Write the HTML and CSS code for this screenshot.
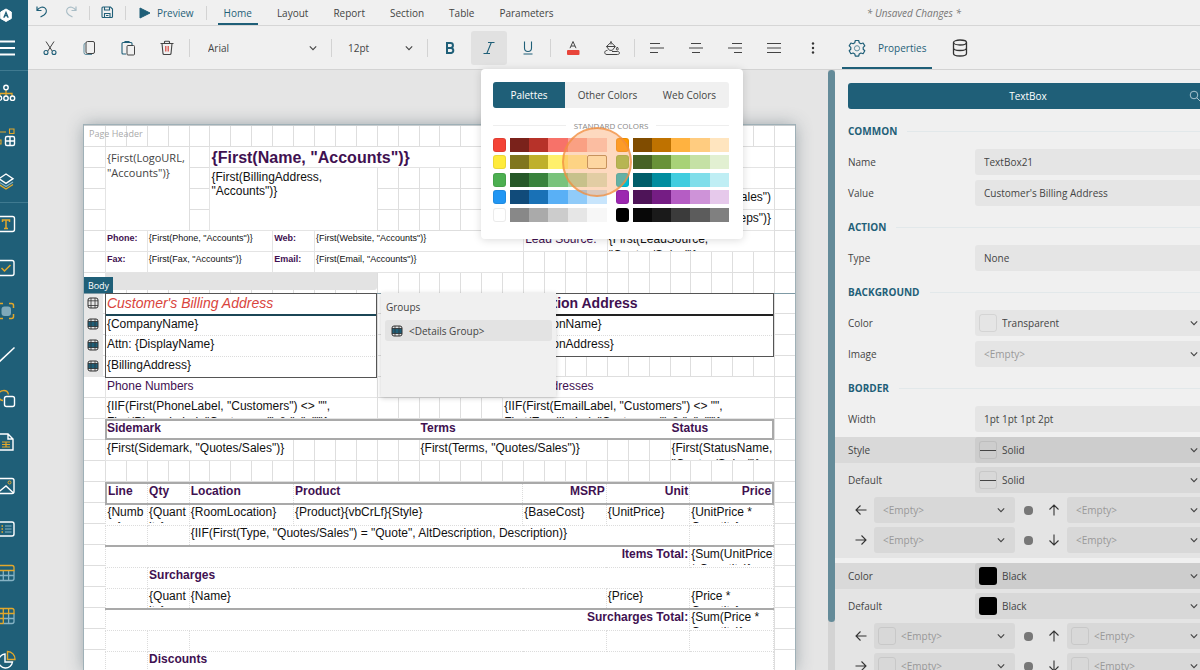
FILE: index.html
```html
<!DOCTYPE html>
<html lang="en">
<head>
    <meta charset="UTF-8">
    <meta name="viewport" content="width=device-width, initial-scale=1.0">
    <title>Report Designer</title>
    <link rel="stylesheet" href="styles.css">
</head>
<body>

<!-- Shared icons -->
<svg class="sprite" aria-hidden="true">
    <symbol id="chevron" viewBox="0 0 10 10"><path d="M1.8 3.4 5 6.6l3.2-3.2" fill="none" stroke="#444" stroke-width="1.1"/></symbol>
    <symbol id="arrow-left" viewBox="0 0 12 12"><path d="M11.5 6H1M5.5 1.5 1 6l4.500 4.500" fill="none" stroke="#333" stroke-width="1.1"/></symbol>
    <symbol id="arrow-right" viewBox="0 0 12 12"><path d="M.5 6H11M6.500 1.500 11 6l-4.500 4.500" fill="none" stroke="#333" stroke-width="1.1"/></symbol>
    <symbol id="arrow-up" viewBox="0 0 12 12"><path d="M6 11.500V1M1.500 5.500 6 1l4.500 4.500" fill="none" stroke="#333" stroke-width="1.1"/></symbol>
    <symbol id="arrow-down" viewBox="0 0 12 12"><path d="M6 .5V11M1.500 6.500 6 11l4.500-4.500" fill="none" stroke="#333" stroke-width="1.1"/></symbol>
    <symbol id="row-details" viewBox="0 0 12 12"><rect x="1" y="3.200" width="10" height="5.600" fill="#1f5f78"/><rect x="1" y="1" width="10" height="10" rx="2" fill="none" stroke="#333"/><path d="M1 3.500h10M1 8.500h10M4 1v10M8 1v10" stroke="#333" stroke-width=".8"/></symbol>
    <symbol id="row-header" viewBox="0 0 12 12"><rect x="1" y="1" width="10" height="10" rx="2" fill="none" stroke="#333"/><path d="M1 3.800h10M1 8.500h10M4 1v10M8 1v10" stroke="#333" stroke-width=".8"/></symbol>
</svg>

<div class="app">
    <nav class="sidebar" aria-label="Report items">
        <button class="side-btn logo" aria-label="Home page"><svg viewBox="0 0 20 20"><path d="M10 4l5.300 3v6.500L10 16.500l-5.300-3V7z" fill="#fff" stroke="#fff" stroke-linejoin="round"/><path d="M7.800 12.800 10 7.500l2.200 5.300M10 10v1.500" fill="none" stroke="#1f5f78" stroke-width="1.300"/></svg></button>
        <button class="side-btn menu" aria-label="Menu"><svg viewBox="0 0 20 20"><path d="M1 3.500h18M1 10h18M1 16.500h18" stroke="#fff" stroke-width="1.800"/></svg></button>
        <div class="side-group">
            <button class="side-btn" aria-label="Explorer"><svg viewBox="0 0 20 20" fill="none"><path d="M10 7v5M4 13v-2.500h12V13M10 10.500V13" stroke="#e3a82b" stroke-width="1.300"/><g stroke="#fff" stroke-width="1.400"><circle cx="10" cy="4.500" r="2.200"/><circle cx="3.500" cy="15.200" r="2.200"/><circle cx="10" cy="15.200" r="2.200"/><circle cx="16.500" cy="15.200" r="2.200"/></g></svg></button>
            <button class="side-btn" aria-label="Groups"><svg viewBox="0 0 20 20" fill="none"><path d="M3 8V5h7M5 13v4H2v-4zM13.500 2h4.500v4.500h-4.500z" stroke="#e3a82b" stroke-width="1.100"/><rect x="9.500" y="9.500" width="9" height="9" rx="1.500" stroke="#fff" stroke-width="1.400"/><path d="M14 9.500v9M9.500 14h9" stroke="#fff" stroke-width="1.400"/></svg></button>
            <button class="side-btn" aria-label="Layers"><svg viewBox="0 0 20 20" fill="none"><path d="M3 13.500l7 4.500 7-4.500" stroke="#e3a82b" stroke-width="1.300"/><path d="M3 11l7 4.500 7-4.500" stroke="#86b3c4" stroke-width="1.200"/><path d="M10 3l7 4.700-7 4.700-7-4.700z" stroke="#fff" stroke-width="1.400"/></svg></button>
        </div>
        <div class="side-group tools">
            <button class="side-btn" aria-label="Text box"><svg viewBox="0 0 20 20" fill="none"><rect x="1.500" y="2.500" width="17" height="15" rx="2" stroke="#fff" stroke-width="1.400"/><path d="M6.500 8V6h7v2M10 6v8.500M8 14.500h4" stroke="#e3a82b" stroke-width="1.500"/></svg></button>
            <button class="side-btn" aria-label="Check box"><svg viewBox="0 0 20 20" fill="none"><rect x="2" y="2.500" width="16" height="15" rx="2" stroke="#fff" stroke-width="1.400"/><path d="M5.500 10l3 3 6-6" stroke="#e3a82b" stroke-width="1.500"/></svg></button>
            <button class="side-btn" aria-label="Container"><svg viewBox="0 0 20 20" fill="none"><rect x="5.500" y="5.500" width="9.500" height="9.500" rx="3" fill="#7fa9ba"/><path d="M2.500 7V4.500a2 2 0 0 1 2-2H7M13 2.500h2.500a2 2 0 0 1 2 2V7M17.500 13v2.500a2 2 0 0 1-2 2H13M7 17.500H4.500a2 2 0 0 1-2-2V13" stroke="#e3a82b" stroke-width="1.500"/></svg></button>
            <button class="side-btn" aria-label="Line"><svg viewBox="0 0 20 20"><path d="M2 18 18.500 2.500" stroke="#fff" stroke-width="1.500"/></svg></button>
            <button class="side-btn" aria-label="Shape"><svg viewBox="0 0 20 20" fill="none"><path d="M7 12.500a5 5 0 1 1 5.500-6" stroke="#e3a82b" stroke-width="1.300"/><rect x="8.500" y="8.500" width="10" height="10" rx="2" stroke="#fff" stroke-width="1.400"/></svg></button>
            <button class="side-btn" aria-label="Rich text"><svg viewBox="0 0 20 20" fill="none"><path d="M3 2h9l5 5v11H3zM12 2v5h5" stroke="#fff" stroke-width="1.400"/><path d="M6 10h8M6 12.500h8M6 15h8M10 10v5" stroke="#e3a82b" stroke-width="1.200"/></svg></button>
            <button class="side-btn" aria-label="Image"><svg viewBox="0 0 20 20" fill="none"><rect x="2" y="2.500" width="16" height="15" rx="2" stroke="#fff" stroke-width="1.400"/><circle cx="13.500" cy="6.500" r="1.500" stroke="#e3a82b"/><path d="M2.500 16l7.500-6 7.500 7" stroke="#fff" stroke-width="1.400"/></svg></button>
            <button class="side-btn" aria-label="List"><svg viewBox="0 0 20 20" fill="none"><rect x="2" y="3" width="16" height="14" rx="2" stroke="#fff" stroke-width="1.400"/><path d="M9 7h6.500M9 10h6.500M9 13h6.500" stroke="#86b3c4" stroke-width="1.100"/><path d="M5.500 7H7M5.500 10H7M5.500 13H7" stroke="#e3a82b" stroke-width="1.300"/></svg></button>
            <button class="side-btn" aria-label="Table"><svg viewBox="0 0 20 20" fill="none"><path d="M2 7.500V15.500a2 2 0 0 0 2 2h12a2 2 0 0 0 2-2V7.500M7.300 7.500v10M12.600 7.500v10M2 12.500h16" stroke="#86b3c4" stroke-width="1.300"/><path d="M2 7.500V4.500a2 2 0 0 1 2-2h12a2 2 0 0 1 2 2v3z" stroke="#e3a82b" stroke-width="1.300"/></svg></button>
            <button class="side-btn" aria-label="Tablix"><svg viewBox="0 0 20 20" fill="none"><path d="M12.600 7.500v10M7.300 12.500H18M18 7.500v8a2 2 0 0 1-2 2H7.300" stroke="#86b3c4" stroke-width="1.300"/><path d="M7.300 17.500H4a2 2 0 0 1-2-2v-11a2 2 0 0 1 2-2h12a2 2 0 0 1 2 2v3H2M7.300 2.500v15M12.600 2.500v5M2 12.500h5.300" stroke="#e3a82b" stroke-width="1.300"/></svg></button>
            <button class="side-btn" aria-label="Chart"><svg viewBox="0 0 20 20" fill="none"><path d="M9 4a7 7 0 1 0 7.500 8H9z" stroke="#fff" stroke-width="1.400"/><path d="M11.500 9.500v-8a7.500 7.500 0 0 1 7.500 8z" stroke="#e3a82b" stroke-width="1.400"/></svg></button>
        </div>
    </nav>

    <div class="workspace">
        <header class="menubar">
            <button class="menu-icon" aria-label="Undo"><svg viewBox="0 0 14 14"><path d="M2 1.500v4h4.500M2.200 5.300C4 2 8.500 1 10.500 3.500s.5 5-1.500 6.500l-3.500 2" fill="none" stroke="#1f5f78" stroke-width="1.200"/></svg></button>
            <button class="menu-icon" aria-label="Redo" disabled><svg viewBox="0 0 14 14"><path d="M12 1.500v4H7.500M11.800 5.300C10 2 5.500 1 3.500 3.500s-.5 5 1.500 6.500l3.500 2" fill="none" stroke="#a9bdc6" stroke-width="1.200"/></svg></button>
            <span class="sep"></span>
            <button class="menu-icon" aria-label="Save"><svg viewBox="0 0 14 14"><path d="M2 3a1 1 0 0 1 1-1h7.500L12.500 4v7.500a1 1 0 0 1-1 1H3a1 1 0 0 1-1-1zM4.500 2v3h5V2M4.500 12.500V8.500h5.500v4M6 10.500h2.500" fill="none" stroke="#1f5f78" stroke-width="1.100"/></svg></button>
            <span class="sep"></span>
            <button class="preview"><svg viewBox="0 0 12 12"><path d="M1 1l10 5-10 5z" fill="#1f5f78" stroke="#1f5f78" stroke-linejoin="round"/></svg>Preview</button>
            <span class="sep"></span>
            <button class="menu-tab active">Home</button>
            <button class="menu-tab">Layout</button>
            <button class="menu-tab">Report</button>
            <button class="menu-tab">Section</button>
            <button class="menu-tab">Table</button>
            <button class="menu-tab">Parameters</button>
            <em class="unsaved">* Unsaved Changes *</em>
        </header>

        <div class="main">
            <main class="designer">
                <div class="toolbar">
                    <button class="tool" aria-label="Cut"><svg viewBox="0 0 16 16" fill="none"><path d="M4 1.500l6.300 9.700M12 1.500 5.700 11.200" stroke="#444"/><circle cx="4" cy="12.500" r="2" stroke="#1f5f78" stroke-width="1.100"/><circle cx="12" cy="12.500" r="2" stroke="#1f5f78" stroke-width="1.100"/></svg></button>
                    <button class="tool" aria-label="Copy"><svg viewBox="0 0 16 16" fill="none"><path d="M4.500 3a2 2 0 0 0-1.500 2v7.500a2 2 0 0 0 2 2h6" stroke="#5d8c9e"/><rect x="5" y="1.500" width="8.500" height="12" rx="1.500" stroke="#444"/></svg></button>
                    <button class="tool" aria-label="Paste"><svg viewBox="0 0 16 16" fill="none"><path d="M6 14H3a1 1 0 0 1-1-1V3.500a1 1 0 0 1 1-1h8a1 1 0 0 1 1 1V5M5 2.500V1.500h4v1" stroke="#1f5f78" stroke-width="1.100"/><rect x="7" y="5.500" width="7.500" height="9.500" rx="1" stroke="#444"/></svg></button>
                    <button class="tool" aria-label="Delete"><svg viewBox="0 0 16 16" fill="none"><path d="M1.500 3.500h13M5.500 3.500V2a.8.8 0 0 1 .8-.8h3.400a.8.8 0 0 1 .8.8v1.500M3 3.500l1 10.200a1 1 0 0 0 1 .8h6a1 1 0 0 0 1-.8L13 3.500" stroke="#444" stroke-width="1.100"/><path d="M6.800 6v5.500M9.200 6v5.500" stroke="#d9443c" stroke-width="1.200"/></svg></button>
                    <span class="sep"></span>
                    <div class="picker font-picker"><select aria-label="Font"><option>Arial</option></select><svg class="chev"><use href="#chevron"/></svg></div>
                    <span class="sep"></span>
                    <div class="picker size-picker"><select aria-label="Font size"><option>12pt</option></select><svg class="chev"><use href="#chevron"/></svg></div>
                    <span class="sep"></span>
                    <button class="tool" aria-label="Bold"><svg viewBox="0 0 16 16" fill="none"><path d="M5 3h3.500a2.400 2.400 0 0 1 0 4.900H5zM5 7.900h4.200a2.600 2.600 0 0 1 0 5.100H5z" stroke="#1f5f78" stroke-width="2"/></svg></button>
                    <button class="tool active" aria-label="Italic"><svg viewBox="0 0 16 16" fill="none"><path d="M7 2.500h6.500M2.500 13.500H9M10.300 2.500l-4.500 11" stroke="#1f5f78" stroke-width="1.100"/></svg></button>
                    <button class="tool" aria-label="Underline"><svg viewBox="0 0 16 16" fill="none"><path d="M4.500 1.500v6.500a3.500 3.500 0 0 0 7 0V1.500M3.500 14h9" stroke="#1f5f78" stroke-width="1.100"/></svg></button>
                    <span class="sep"></span>
                    <button class="tool" aria-label="Text color"><svg viewBox="0 0 16 16" fill="none"><path d="M5 8.200 8 1.500l3 6.700M6 6h4" stroke="#444"/><rect x="2" y="10" width="12.500" height="5" rx="1" fill="#e8443a"/></svg></button>
                    <div class="popup-anchor">
                        <button class="tool" aria-label="Background color"><svg viewBox="0 0 16 16" fill="none"><path d="M7 1v3.500M2.500 6.500 7 2.300l4.300 4.200-3 3.800H5.500zM2.500 6.500h8.800M13.300 7c1.200 1.700 1.400 3 0 3s-1.200-1.300 0-3zM3.500 10.300c-2 .2-2.800 1.200-2.800 2.200s.8 2 2.300 2h10.500c1.200 0 2-.8 2-1.600s-.8-1.400-2-1.400H8" stroke="#444"/></svg></button>
                        <div class="color-popup">
                            <div class="seg">
                                <button class="active">Palettes</button>
                                <button>Other Colors</button>
                                <button>Web Colors</button>
                            </div>
                            <div class="palette-title">STANDARD COLORS</div>
                            <div class="palette" id="palette"></div>
                            <div class="click-mark"></div>
                        </div>
                    </div>
                    <span class="sep"></span>
                    <button class="tool" aria-label="Align left"><svg viewBox="0 0 16 16"><path d="M1 3.500h10M1 8h14M1 12.500h8" stroke="#444"/></svg></button>
                    <button class="tool" aria-label="Align center"><svg viewBox="0 0 16 16"><path d="M3 3.500h10M1 8h14M4 12.500h8" stroke="#444"/></svg></button>
                    <button class="tool" aria-label="Align right"><svg viewBox="0 0 16 16"><path d="M5 3.500h10M1 8h14M7 12.500h8" stroke="#444"/></svg></button>
                    <button class="tool" aria-label="Justify"><svg viewBox="0 0 16 16"><path d="M1 3.500h14M1 8h14M1 12.500h14" stroke="#444"/></svg></button>
                    <button class="tool" aria-label="More"><svg viewBox="0 0 16 16" fill="#333"><circle cx="8" cy="3.500" r="1.200"/><circle cx="8" cy="8" r="1.200"/><circle cx="8" cy="12.500" r="1.200"/></svg></button>
                </div>

                <div class="canvas">
                    <div class="paper">
                        <section class="band">
                            <span class="band-name">Page Header</span>
                            <div class="item logo-box">{First(LogoURL, "Accounts")}</div>
                            <div class="item title">{First(Name, "Accounts")}</div>
                            <div class="item address">{First(BillingAddress, "Accounts")}</div>
                            <div class="item quote-top"></div>
                            <div class="item quote r3">{First(QuoteNumber, "Quotes/Sales")</div>
                            <div class="item quote r4">{First(NextStep, "Steps")}</div>
                            <div class="item small label r5 c1">Phone:</div>
                            <div class="item small r5 c2">{First(Phone, "Accounts")}</div>
                            <div class="item small label r5 c3">Web:</div>
                            <div class="item small r5 c4">{First(Website, "Accounts")}</div>
                            <div class="item lead-label">Lead Source:</div>
                            <div class="item lead">{First(LeadSource, "Quotes/Sales")}</div>
                            <div class="item small label r6 c1">Fax:</div>
                            <div class="item small r6 c2">{First(Fax, "Accounts")}</div>
                            <div class="item small label r6 c3">Email:</div>
                            <div class="item small r6 c4">{First(Email, "Accounts")}</div>
                            <div class="column-handle"></div>
                        </section>

                        <section class="band body-band">
                            <span class="band-tag">Body</span>
                            <div class="row-handles">
                                <svg><use href="#row-header"/></svg>
                                <svg><use href="#row-details"/></svg>
                                <svg><use href="#row-details"/></svg>
                                <svg><use href="#row-details"/></svg>
                            </div>
                            <table class="block billing">
                                <tr><th class="selected"><div>Customer's Billing Address</div></th></tr>
                                <tr><td><div>{CompanyName}</div></td></tr>
                                <tr><td><div>Attn: {DisplayName}</div></td></tr>
                                <tr><td><div>{BillingAddress}</div></td></tr>
                            </table>
                            <table class="block install">
                                <tr><th><div>Installation Address</div></th></tr>
                                <tr><td><div>{InstallationName}</div></td></tr>
                                <tr><td><div>{InstallationAddress}</div></td></tr>
                            </table>
                            <div class="item caption phones">Phone Numbers</div>
                            <div class="item caption emails">Email Addresses</div>
                            <div class="item phone-list">{IIF(First(PhoneLabel, "Customers") &lt;&gt; "", First(PhoneLabel, "Customers") &amp; ": ", "")}</div>
                            <div class="item email-list">{IIF(First(EmailLabel, "Customers") &lt;&gt; "", First(EmailLabel, "Customers") &amp; ": ", "")}</div>

                            <div class="terms-head">
                                <div>Sidemark</div>
                                <div>Terms</div>
                                <div>Status</div>
                            </div>
                            <div class="item sidemark">{First(Sidemark, "Quotes/Sales")}</div>
                            <div class="item terms">{First(Terms, "Quotes/Sales")}</div>
                            <div class="item status">{First(StatusName, "Quotes/Sales")}</div>

                            <table class="lines">
                                <colgroup>
                                    <col class="w2"><col class="w2"><col class="w5"><col class="w11"><col class="w4"><col class="w4"><col class="w4">
                                </colgroup>
                                <thead>
                                    <tr>
                                        <th><div>Line</div></th><th><div>Qty</div></th><th><div>Location</div></th><th><div>Product</div></th>
                                        <th class="num"><div>MSRP</div></th><th class="num"><div>Unit</div></th><th class="num"><div>Price</div></th>
                                    </tr>
                                </thead>
                                <tbody>
                                    <tr>
                                        <td class="narrow"><div>{Number}</div></td><td class="narrow"><div>{Quantity}</div></td><td><div>{RoomLocation}</div></td><td><div>{Product}{vbCrLf}{Style}</div></td>
                                        <td><div>{BaseCost}</div></td><td><div>{UnitPrice}</div></td><td><div>{UnitPrice * Quantity}</div></td>
                                    </tr>
                                    <tr class="ruled">
                                        <td></td><td></td><td colspan="4"><div>{IIF(First(Type, "Quotes/Sales") = "Quote", AltDescription, Description)}</div></td><td></td>
                                    </tr>
                                    <tr>
                                        <th colspan="6" class="num"><div>Items Total:</div></th><td><div>{Sum(UnitPrice * Quantity)}</div></td>
                                    </tr>
                                    <tr>
                                        <td></td><th colspan="6"><div>Surcharges</div></th>
                                    </tr>
                                    <tr class="ruled">
                                        <td></td><td class="narrow"><div>{Quantity}</div></td><td colspan="3"><div>{Name}</div></td><td><div>{Price}</div></td><td><div>{Price * Quantity}</div></td>
                                    </tr>
                                    <tr>
                                        <th colspan="6" class="num"><div>Surcharges Total:</div></th><td><div>{Sum(Price * Quantity)}</div></td>
                                    </tr>
                                    <tr>
                                        <td></td><td></td><td colspan="3"></td><td></td><td></td>
                                    </tr>
                                    <tr>
                                        <td></td><th colspan="6"><div>Discounts</div></th>
                                    </tr>
                                </tbody>
                            </table>

                            <div class="groups">
                                <h4>Groups</h4>
                                <button><svg><use href="#row-details"/></svg>&lt;Details Group&gt;</button>
                            </div>
                        </section>
                    </div>
                    <div class="scrollbar"><div class="thumb"></div></div>
                </div>
            </main>

            <aside class="panel">
                <div class="panel-tabs">
                    <button class="active"><svg viewBox="0 0 18 18" fill="none"><path d="M7.300 1.500h3.400l.5 2.200 1.700 1 2.200-.7 1.700 2.900-1.600 1.500v1.900l1.600 1.500-1.700 2.900-2.200-.7-1.700 1-.5 2.200H7.300l-.5-2.200-1.700-1-2.200.7-1.700-2.900 1.600-1.500V8.400L1.200 6.900 2.900 4l2.200.7 1.700-1z" stroke="#1f5f78" stroke-width="1.200" stroke-linejoin="round"/><circle cx="9" cy="9.300" r="2.600" stroke="#5d8c9e"/></svg>Properties</button>
                    <button aria-label="Data"><svg viewBox="0 0 18 18" fill="none" stroke="#333" stroke-width="1.300"><ellipse cx="9" cy="3.500" rx="6.500" ry="2.500"/><path d="M2.500 3.500v11c0 1.400 2.900 2.500 6.500 2.500s6.500-1.100 6.500-2.500v-11M2.500 9c0 1.400 2.900 2.500 6.500 2.500s6.500-1.100 6.500-2.500"/></svg></button>
                </div>
                <div class="props">
                    <div class="props-title">TextBox<svg viewBox="0 0 12 12" fill="none" stroke="#a8c4cf"><circle cx="5" cy="5" r="3.800"/><path d="M7.800 7.800 11.500 11.500"/></svg></div>

                    <section>
                        <h3>COMMON</h3>
                        <div class="prop"><label for="name">Name</label><input class="field" id="name" type="text" value="TextBox21"></div>
                        <div class="prop"><label for="value">Value</label><input class="field" id="value" type="text" value="Customer's Billing Address"></div>
                    </section>
                    <section>
                        <h3>ACTION</h3>
                        <div class="prop"><label for="type">Type</label><input class="field" id="type" type="text" value="None"></div>
                    </section>
                    <section>
                        <h3>BACKGROUND</h3>
                        <div class="prop"><label for="bg">Color</label><div class="field pick"><span class="swatch"></span><select id="bg"><option>Transparent</option></select><svg class="chev"><use href="#chevron"/></svg></div></div>
                        <div class="prop"><label for="image">Image</label><div class="field pick empty"><select id="image"><option>&lt;Empty&gt;</option></select><svg class="chev"><use href="#chevron"/></svg></div></div>
                    </section>
                    <section>
                        <h3>BORDER</h3>
                        <div class="prop"><label for="bwidth">Width</label><input class="field" id="bwidth" type="text" value="1pt 1pt 1pt 2pt"></div>
                        <div class="group">
                            <div class="prop group-head"><label for="bstyle">Style</label><div class="field pick"><span class="swatch line"></span><select id="bstyle"><option>Solid</option></select><svg class="chev"><use href="#chevron"/></svg></div></div>
                            <div class="prop"><label for="bstyle2">Default</label><div class="field pick"><span class="swatch line"></span><select id="bstyle2"><option>Solid</option></select><svg class="chev"><use href="#chevron"/></svg></div></div>
                            <div class="sides">
                                <svg class="arrow"><use href="#arrow-left"/></svg>
                                <div class="field pick empty"><select aria-label="Left style"><option>&lt;Empty&gt;</option></select><svg class="chev"><use href="#chevron"/></svg></div>
                                <span class="dot"></span>
                                <svg class="arrow"><use href="#arrow-up"/></svg>
                                <div class="field pick empty"><select aria-label="Top style"><option>&lt;Empty&gt;</option></select><svg class="chev"><use href="#chevron"/></svg></div>
                            </div>
                            <div class="sides">
                                <svg class="arrow"><use href="#arrow-right"/></svg>
                                <div class="field pick empty"><select aria-label="Right style"><option>&lt;Empty&gt;</option></select><svg class="chev"><use href="#chevron"/></svg></div>
                                <span class="dot"></span>
                                <svg class="arrow"><use href="#arrow-down"/></svg>
                                <div class="field pick empty"><select aria-label="Bottom style"><option>&lt;Empty&gt;</option></select><svg class="chev"><use href="#chevron"/></svg></div>
                            </div>
                        </div>
                        <div class="group">
                            <div class="prop group-head"><label for="bcolor">Color</label><div class="field pick"><span class="swatch black"></span><select id="bcolor"><option>Black</option></select><svg class="chev"><use href="#chevron"/></svg></div></div>
                            <div class="prop"><label for="bcolor2">Default</label><div class="field pick"><span class="swatch black"></span><select id="bcolor2"><option>Black</option></select><svg class="chev"><use href="#chevron"/></svg></div></div>
                            <div class="sides">
                                <svg class="arrow"><use href="#arrow-left"/></svg>
                                <div class="field pick empty"><span class="swatch"></span><select aria-label="Left color"><option>&lt;Empty&gt;</option></select><svg class="chev"><use href="#chevron"/></svg></div>
                                <span class="dot"></span>
                                <svg class="arrow"><use href="#arrow-up"/></svg>
                                <div class="field pick empty"><span class="swatch"></span><select aria-label="Top color"><option>&lt;Empty&gt;</option></select><svg class="chev"><use href="#chevron"/></svg></div>
                            </div>
                            <div class="sides">
                                <svg class="arrow"><use href="#arrow-right"/></svg>
                                <div class="field pick empty"><span class="swatch"></span><select aria-label="Right color"><option>&lt;Empty&gt;</option></select><svg class="chev"><use href="#chevron"/></svg></div>
                                <span class="dot"></span>
                                <svg class="arrow"><use href="#arrow-down"/></svg>
                                <div class="field pick empty"><span class="swatch"></span><select aria-label="Bottom color"><option>&lt;Empty&gt;</option></select><svg class="chev"><use href="#chevron"/></svg></div>
                            </div>
                        </div>
                    </section>
                </div>
            </aside>
        </div>
    </div>
</div>

<script src="script.js"></script>
</body>
</html>
```
FILE: styles.css
```css
* {
    box-sizing: border-box;
}

body {
    margin: 0;
    font-family: "Open Sans", "Noto Sans", sans-serif;
    font-size: 10px;
    color: #444;
    background: #f0f0f0;
    overflow: hidden;
}

button, select, input {
    font: inherit;
    color: inherit;
    border: none;
    background: none;
    padding: 0;
    margin: 0;
    cursor: pointer;
}

h3, h4 {
    margin: 0;
}

.sprite {
    display: none;
}

.app {
    display: flex;
    height: 100vh;
}

/* Left sidebar */
.sidebar {
    display: flex;
    flex-direction: column;
    flex: none;
    width: 28px;
    background: #1f5f78;
    overflow: hidden;
}

.side-btn {
    align-self: flex-end;
    flex: none;
    width: 20px;
    height: 20px;
    margin-right: 12px;
}

.side-btn svg {
    display: block;
    width: 20px;
    height: 20px;
}

.logo {
    margin-top: 5px;
}

.menu {
    margin-top: 13px;
    margin-bottom: 12px;
}

.side-group {
    display: flex;
    flex-direction: column;
    gap: 24px;
    padding: 12px 0 11px;
    border-top: 1px solid #3f7a90;
}

.tools {
    flex: 1;
    gap: 0;
    justify-content: space-between;
    padding-top: 11px;
    padding-bottom: 0;
}

/* Top bar */
.workspace {
    flex: 1;
    min-width: 0;
    display: flex;
    flex-direction: column;
}

.menubar {
    display: flex;
    align-items: center;
    flex: none;
    height: 26px;
    padding-left: 6px;
    border-bottom: 1px solid #d6d6d6;
}

.menu-icon {
    width: 16px;
    height: 16px;
    margin-right: 13px;
}

.menu-icon svg {
    width: 14px;
    height: 14px;
}

.sep {
    flex: none;
    width: 1px;
    height: 14px;
    background: #d3d3d3;
}

.menubar .menu-icon:nth-child(2),
.menubar .menu-icon:nth-child(4) {
    margin-right: 10px;
}

.menubar .menu-icon:nth-child(4) {
    margin-left: 9px;
}

.preview {
    display: flex;
    align-items: center;
    gap: 6px;
    margin: 0 12px 0 13px;
    color: #1f5f78;
}

.preview svg {
    width: 12px;
    height: 12px;
}

.menu-tab {
    height: 25px;
    margin-left: 13px;
    padding: 2px 6px 0;
    border-bottom: 2px solid transparent;
}

.sep + .menu-tab {
    margin-left: 11px;
}

.menu-tab.active {
    color: #1f5f78;
    border-color: #1f5f78;
}

.unsaved {
    margin-left: auto;
    margin-right: 239px;
    color: #777;
}

.main {
    flex: 1;
    min-height: 0;
    display: flex;
}

.designer {
    flex: 1;
    min-width: 0;
    display: flex;
    flex-direction: column;
}

.toolbar {
    display: flex;
    align-items: center;
    flex: none;
    gap: 3px;
    height: 44px;
    padding-left: 4px;
    border-bottom: 1px solid #d3d3d3;
}

.toolbar .sep {
    height: 18px;
    margin: 0 1px;
}

.tool {
    display: flex;
    align-items: center;
    justify-content: center;
    flex: none;
    width: 36px;
    height: 34px;
    border-radius: 3px;
}

.tool svg {
    width: 16px;
    height: 16px;
}

.tool.active {
    background: #e1e1e1;
}

.picker {
    display: flex;
    align-items: center;
    padding: 0 9px 0 14px;
}

.font-picker {
    width: 133px;
}

.size-picker {
    width: 87px;
    padding-left: 12px;
}

select {
    appearance: none;
    flex: 1;
    min-width: 0;
    height: 100%;
}

.chev {
    flex: none;
    width: 10px;
    height: 10px;
}

/* Color popup */
.popup-anchor {
    position: relative;
}

.color-popup {
    position: absolute;
    z-index: 5;
    top: 38px;
    right: -113px;
    width: 262px;
    height: 170px;
    padding: 13px 14px 0 12px;
    background: #fff;
    border-radius: 4px;
    box-shadow: 0 1px 8px rgba(0, 0, 0, 0.15);
}

.seg {
    display: grid;
    grid-template-columns: 72fr 85fr 79fr;
    height: 26px;
    background: #f0f0f0;
    border-radius: 3px;
    overflow: hidden;
}

.seg .active {
    background: #1f5f78;
    color: #fff;
}

.palette-title {
    display: flex;
    align-items: center;
    gap: 8px;
    height: 12px;
    margin: 12px 0 6px;
    font-size: 8px;
    color: #888;
}

.palette-title::before,
.palette-title::after {
    content: "";
    flex: 1;
    border-top: 1px solid #eee;
}

.palette {
    display: grid;
    grid-template-columns: 1fr 1fr;
    column-gap: 9px;
    align-content: space-between;
    height: 84px;
}

.shades {
    display: grid;
    grid-template-columns: 13px 23px repeat(4, 1fr);
    height: 14px;
}

.shades button:first-child {
    border-radius: 3px;
    box-shadow: inset 0 0 0 1px rgba(0, 0, 0, 0.08);
}

.shades button:nth-child(2) {
    margin-left: 4px;
}

.shades .hover {
    border: 1px solid #a58a5c;
    border-radius: 2px;
}

/* Mouse click highlight */
.click-mark {
    position: absolute;
    top: 58px;
    left: 81px;
    width: 70px;
    height: 70px;
    border: 2px solid rgba(240, 140, 60, 0.7);
    border-radius: 50%;
    background: rgba(250, 160, 95, 0.4);
    pointer-events: none;
}

/* Canvas */
.canvas {
    position: relative;
    flex: 1;
    min-height: 0;
    overflow: hidden;
    background: #e5e5e5;
    padding: 55px 0 0 56px;
}

.paper {
    width: 711px;
    background: #fff;
    border-top: 1px solid #c8ccce;
    box-shadow: 0 0 0 1px #9fb0b7, 0 0 16px rgba(60, 80, 90, 0.45);
    font-family: "Liberation Sans", Arial, sans-serif;
    font-size: 12px;
    line-height: 16px;
    color: #111;
}

.scrollbar {
    position: absolute;
    top: 0;
    right: 0;
    bottom: 0;
    width: 7px;
    background: #d3d3d3;
}

.thumb {
    height: 92%;
    border-radius: 4px;
    background: #648b99;
}

/* left margin keeps only the horizontal lines */
.band {
    position: relative;
    display: grid;
    grid-template-columns: repeat(34, 1fr);
    grid-template-rows: repeat(7, 21px) 20px;
    background:
        repeating-linear-gradient(180deg, transparent 0 20px, #dedede 20px 21px),
        linear-gradient(90deg, #fff 20px, transparent 20px),
        repeating-linear-gradient(90deg, #dedede 0 1px, transparent 1px calc(100% / 34));
}

.band-name {
    grid-row: 1;
    grid-column: 1 / 6;
    padding-left: 5px;
    font-family: "Open Sans", "Noto Sans", sans-serif;
    font-size: 9px;
    color: #aaa;
}

.item {
    overflow: hidden;
    padding-left: 1px;
    background: #fff;
    border: 1px solid #e4e4e4;
    border-width: 0 0 1px 1px;
    overflow-wrap: anywhere;
}

.logo-box {
    grid-area: 2 / 2 / 6 / 6;
    padding-top: 3px;
    font-family: "Open Sans", "Noto Sans", sans-serif;
    font-size: 11px;
    line-height: 15px;
    color: #444;
}

.title {
    grid-area: 2 / 7 / 3 / 34;
    padding-top: 2px;
    font-size: 16px;
    font-weight: bold;
    line-height: 18px;
    color: #3f1151;
}

.address {
    grid-area: 3 / 7 / 6 / 15;
    padding-top: 2px;
    line-height: 14px;
}

.quote-top {
    grid-area: 3 / 22 / 4 / 34;
}

.quote {
    grid-column: 22 / 34;
    padding-right: 3px;
    text-align: right;
}

.r3 { grid-row: 4; }
.r4 { grid-row: 5; }
.r5 { grid-row: 6; }
.r6 { grid-row: 7; }
.c1 { grid-column: 2 / 4; }
.c2 { grid-column: 4 / 10; }
.c3 { grid-column: 10 / 12; }
.c4 { grid-column: 12 / 22; }

.small {
    font-size: 9px;
    line-height: 14px;
}

.label {
    font-weight: bold;
    color: #3f1151;
}

.lead-label {
    grid-area: 6 / 22 / 7 / 26;
    color: #3f1151;
}

.lead {
    grid-area: 6 / 26 / 7 / 34;
    padding-right: 50px;
}

.column-handle {
    grid-area: 8 / 2 / 9 / 15;
    margin-bottom: 3px;
    background: #e3e3e3;
    border-radius: 0 0 3px 0;
}

.body-band {
    grid-template-rows: repeat(18, 21px);
}

.body-band::before {
    content: "";
    position: absolute;
    left: 0;
    right: 0;
    border-top: 1px solid #7f9aa5;
}

.band-tag {
    position: absolute;
    top: -16px;
    left: 0;
    width: 29px;
    height: 16px;
    line-height: 17px;
    text-align: center;
    background: #1f5f78;
    color: #fff;
    font-family: "Open Sans", "Noto Sans", sans-serif;
    font-size: 9px;
}

.row-handles {
    grid-area: 1 / 1 / 5 / 2;
    display: grid;
    grid-template-rows: repeat(4, 20px);
    gap: 1px;
    place-items: center;
    margin-right: 2px;
    background: #e8e8e8;
}

.row-handles svg {
    width: 12px;
    height: 12px;
}

table {
    table-layout: fixed;
    width: 100%;
    border-collapse: collapse;
    background: #fff;
}

tr {
    height: 21px;
}

th, td {
    height: 21px;
    padding: 0;
    border: 1px dotted #dcdcdc;
    text-align: left;
    vertical-align: top;
}

th {
    color: #3f1151;
}

th div, td div {
    height: 19px;
    padding-left: 1px;
    overflow: hidden;
    overflow-wrap: anywhere;
}

.block {
    position: relative;
    outline: 1px solid #555;
    outline-offset: -1px;
}

.block th {
    border-bottom: 2px solid #222;
    font-size: 14px;
}

.block th div {
    line-height: 18px;
}

.block th.selected {
    border: 1px solid #1f5f78;
    border-bottom: 2px solid #1b4656;
    color: #d9443c;
    font-style: italic;
    font-weight: normal;
}

.billing {
    grid-area: 1 / 2 / 5 / 15;
}

.install {
    grid-area: 1 / 21 / 4 / 34;
}

.caption {
    color: #3f1151;
    line-height: 18px;
}

.phones {
    grid-area: 5 / 2 / 6 / 15;
}

.emails {
    grid-area: 5 / 21 / 6 / 34;
}

.phone-list {
    grid-area: 6 / 2 / 7 / 15;
}

.email-list {
    grid-area: 6 / 21 / 7 / 34;
}

.phone-list, .email-list {
    padding-right: 45px;
}

.terms-head {
    grid-area: 7 / 2 / 8 / 34;
    display: grid;
    grid-template-columns: 15fr 12fr 5fr;
    background: #fff;
    box-shadow: inset 0 0 0 2px #a9a9a9;
    font-weight: bold;
    line-height: 18px;
    color: #3f1151;
}

.terms-head div {
    padding-left: 2px;
}

.sidemark {
    grid-area: 8 / 2 / 9 / 11;
}

.terms {
    grid-area: 8 / 17 / 9 / 26;
}

.status {
    grid-area: 8 / 29 / 9 / 34;
}

.lines {
    grid-area: 10 / 2 / 19 / 34;
    line-height: 15px;
}

.lines td div {
    height: 18px;
}

.lines thead {
    border: 2px solid #a9a9a9;
}

.lines .ruled {
    border-bottom: 2px solid #a9a9a9;
}

.lines .num {
    text-align: right;
}

.lines .narrow div {
    padding-right: 3px;
}

.num div {
    padding-right: 1px;
}

.w2 { width: calc(200% / 32); }
.w4 { width: calc(400% / 32); }
.w5 { width: calc(500% / 32); }
.w11 { width: calc(1100% / 32); }

/* Groups flyout */
.groups {
    position: absolute;
    top: 0;
    left: 297px;
    width: 175px;
    height: 104px;
    padding: 4px;
    background: #f0f0f0;
    box-shadow: 0 1px 5px rgba(0, 0, 0, 0.2);
    font-family: "Open Sans", "Noto Sans", sans-serif;
    font-size: 10px;
    color: #444;
}

.groups h4 {
    height: 23px;
    line-height: 20px;
    font-size: 10px;
    font-weight: normal;
    padding-left: 1px;
}

.groups button {
    display: flex;
    align-items: center;
    gap: 6px;
    width: 100%;
    height: 21px;
    padding-left: 6px;
    border-radius: 3px;
    background: #e3e3e3;
}

.groups svg {
    width: 12px;
    height: 12px;
}

/* Properties panel */
.panel {
    flex: none;
    display: flex;
    flex-direction: column;
    width: 365px;
    overflow: hidden;
}

.panel-tabs {
    display: flex;
    flex: none;
    gap: 13px;
    height: 44px;
    padding-left: 7px;
    border-bottom: 1px solid #d3d3d3;
}

.panel-tabs button {
    display: flex;
    align-items: center;
    gap: 12px;
    padding: 2px 6px 0;
    border-bottom: 2px solid transparent;
}

.panel-tabs .active {
    color: #1f5f78;
    border-color: #1f5f78;
}

.panel-tabs svg {
    width: 18px;
    height: 18px;
}

.props {
    margin-right: -8px;
    padding: 13px 0 0 13px;
}

.props-title {
    position: relative;
    height: 26px;
    margin-bottom: 9px;
    line-height: 27px;
    text-align: center;
    color: #fff;
    background: #1f5f78;
    border-radius: 3px;
}

.props-title svg {
    position: absolute;
    right: 7px;
    top: 7px;
    width: 12px;
    height: 12px;
}

.props section {
    display: flex;
    flex-direction: column;
    gap: 5px;
    margin-bottom: 8px;
}

.props h3 {
    display: flex;
    align-items: center;
    gap: 10px;
    height: 26px;
    font-size: 10px;
    font-weight: bold;
    color: #1f5f78;
}

.props h3::after {
    content: "";
    flex: 1;
    border-top: 1px solid #e2e8ea;
}

.prop {
    display: grid;
    grid-template-columns: 127px 1fr;
    align-items: center;
}

.field {
    width: 100%;
    height: 26px;
    padding: 0 9px;
    background: #e5e5e5;
    border-radius: 3px;
}

.pick {
    display: flex;
    align-items: center;
}

.pick:has(.swatch) {
    padding-left: 4px;
}

.swatch {
    flex: none;
    width: 18px;
    height: 18px;
    margin-right: 5px;
    border: 1px solid rgba(0, 0, 0, 0.07);
    border-radius: 3px;
}

.swatch.black {
    background: #000;
}

.swatch.line {
    background: linear-gradient(#444, #444) center / 100% 1px no-repeat;
}

.empty {
    color: #999;
}

.group {
    display: flex;
    flex-direction: column;
    gap: 4px;
    margin-left: -13px;
    padding: 0 0 5px 13px;
    background: #e4e4e4;
}

.group .field {
    background: #d8d8d8;
}

.group-head {
    margin-left: -13px;
    padding-left: 13px;
    background: #d9d9d9;
}

.group .group-head .field {
    background: #cdcdcd;
}

.sides {
    display: grid;
    grid-template-columns: 26px 1fr 26px 26px 1fr;
    align-items: center;
    justify-items: center;
}

.arrow {
    width: 12px;
    height: 12px;
}

.dot {
    width: 9px;
    height: 9px;
    border-radius: 4px;
    background: #777;
}
```
FILE: script.js
```js
// base color first, then its shades from dark to light
const palettes = [
    ['#f44336', '#7a221b', '#b73229', '#f77269', '#faa19b', '#fcd0cd'],
    ['#ff9800', '#804c00', '#bf7200', '#ffb240', '#ffcc80', '#ffe5bf'],
    ['#ffeb3b', '#80761e', '#bfb02c', '#fff06c', '#fff59d', '#ffface'],
    ['#8bc34a', '#466225', '#689238', '#a8d277', '#c5e1a5', '#e2f0d2'],
    ['#4caf50', '#265828', '#39833c', '#79c37c', '#a6d7a8', '#d2ebd3'],
    ['#00bcd4', '#005e6a', '#008d9f', '#40cddf', '#80deea', '#bfeef4'],
    ['#2196f3', '#114b7a', '#1971b6', '#59b0f6', '#90cbf9', '#c8e5fc'],
    ['#9c27b0', '#4e1458', '#751d84', '#b55dc4', '#ce93d8', '#e6c9eb'],
    ['#ffffff', '#888888', '#aaaaaa', '#cccccc', '#e6e6e6', '#f7f7f7'],
    ['#000000', '#080808', '#1a1a1a', '#3b3b3b', '#5c5c5c', '#808080']
];

const palette = document.getElementById('palette');

palettes.forEach((colors, row) => {
    const line = document.createElement('div');
    line.className = 'shades';
    colors.forEach((color, i) => {
        const swatch = document.createElement('button');
        swatch.style.backgroundColor = color;
        swatch.setAttribute('aria-label', color);
        if (row === 2 && i === 5) {
            swatch.className = 'hover';
        }
        line.appendChild(swatch);
    });
    palette.appendChild(line);
});
```
